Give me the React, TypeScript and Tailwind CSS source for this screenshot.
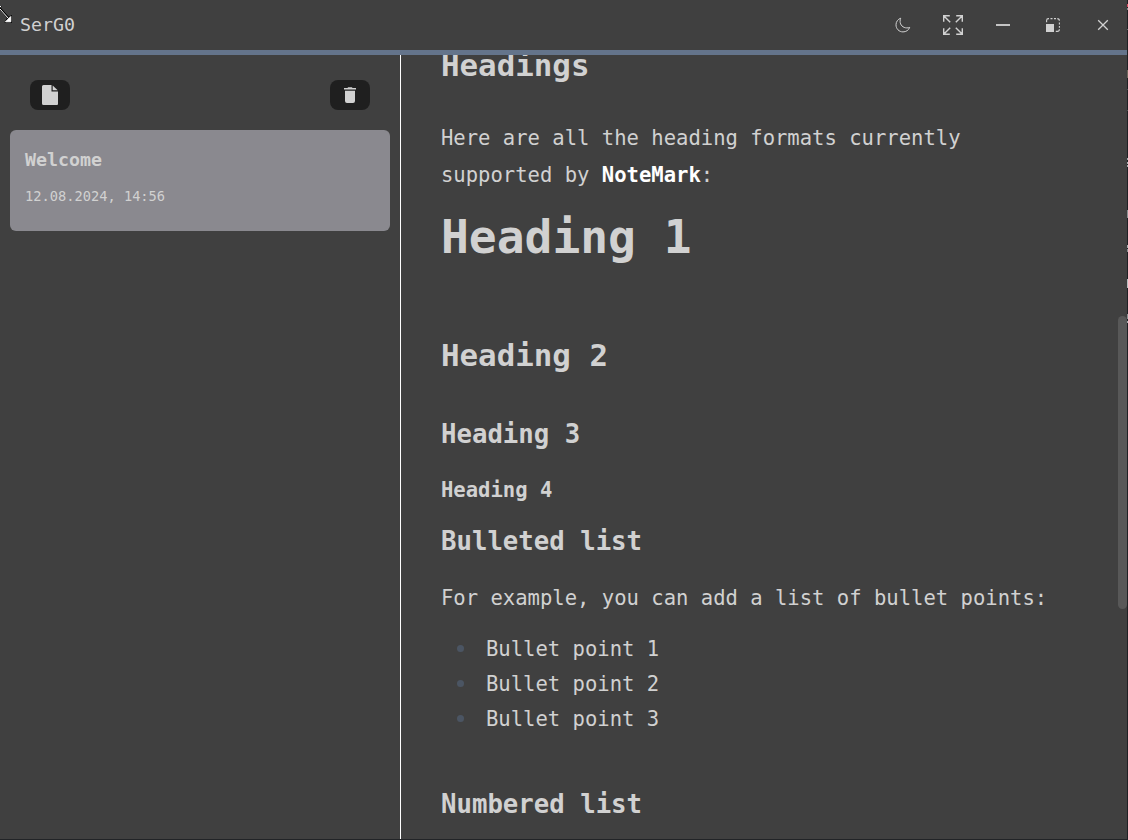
import type { ReactNode } from "react";

function Moon() {
  return (
    <svg width="16" height="16" viewBox="0 0 16 16" fill="none" stroke="currentColor" strokeWidth="1" strokeLinejoin="round">
      <path d="M5.7 1.2C2.900 2.200 1 4.700 1 7.800 1 11.800 4 14.900 8 14.900c3.100 0 5.700-1.700 6.700-4.500-1 .4-1.900.5-2.900.5C8 10.900 5.100 8 5.100 4.300c0-1.100.2-2.100.6-3.100Z" />
    </svg>
  );
}

function ArrowsOut() {
  return (
    <svg width="20" height="20" viewBox="0 0 20 20" fill="none" stroke="currentColor" strokeWidth="1.4">
      <path d="M.7 6.800V.7H6.800M.7.7l6.500 6.500M13.200.7H19.300V6.800M19.300.7l-6.500 6.500M.7 13.200V19.300H6.800M.7 19.300l6.500-6.500M19.300 13.200V19.300H13.200M19.300 19.300l-6.500-6.500" />
    </svg>
  );
}

function Restore() {
  return (
    <svg width="14" height="14" viewBox="0 0 14 14" fill="none" stroke="currentColor" strokeWidth="1.1">
      <rect x="0" y="6" width="8" height="8" fill="currentColor" stroke="none" />
      <path d="M.6 4.300V2.500A1.900 1.900 0 0 1 2.500.6H3M4.500.6h2M8 .6h2M11.300.6c1.300 0 2.100.8 2.100 2.200M13.400 4.500v1.900M13.400 7.900v1.900M13.400 11.200c0 1.400-.8 2.200-2.100 2.200H9.800" />
    </svg>
  );
}

function FileIcon() {
  return (
    <svg width="16" height="20" viewBox="0 0 16 20" fill="currentColor">
      <path d="M1.500 0H9.500v6.400H16V19a1 1 0 0 1-1 1H1.500A1.500 1.500 0 0 1 0 18.500v-17A1.500 1.500 0 0 1 1.500 0Z" />
      <path d="M10.700.4 15.700 5.300h-5Z" />
    </svg>
  );
}

function TrashIcon() {
  return (
    <svg width="12" height="16" viewBox="0 0 12 16" fill="currentColor">
      <path d="M0 1h3.400l.8-.8h3.600l.8.8H12v1.500H0ZM1 3.700h10v10.300a2 2 0 0 1-2 2H3a2 2 0 0 1-2-2Z" />
    </svg>
  );
}

function ResizeCursor() {
  return (
    <svg className="pointer-events-none absolute top-1 left-0" width="13" height="20" viewBox="0 0 13 20">
      <path d="M0 2.500h1.500M0 5.500 7.500 14 5 18.500h6.500V11.500L9 13.500 0 3.500" fill="#000" stroke="#000" strokeWidth="1" />
      <path d="M0 2.500h1M0 5l8.500 9.500M5.500 17.800 10.800 12.500v5.300Z" fill="#fff" stroke="#fff" strokeWidth="1" />
    </svg>
  );
}

function ToolButton({ children }: { children: ReactNode }) {
  return <button className="flex h-[30px] w-10 items-center justify-center rounded-lg bg-[#1f1f1f]">{children}</button>;
}

function Bullet({ children }: { children: ReactNode }) {
  return (
    <li className="flex items-center">
      <span className="relative -top-px mr-[22px] ml-4 size-[7px] rounded-full bg-[#4b5563]" />
      {children}
    </li>
  );
}

function DesktopEdge() {
  return (
    <div className="flex w-px shrink-0 flex-col bg-[#1f2124]">
      <span className="mt-1 h-[3px] bg-[#d9485f]" />
      <span className="mt-px h-[2px] bg-[#8a8f8f]" />
      <span className="mt-[19px] h-px bg-[#6b6e70]" />
      <span className="mt-10 h-2 bg-[#6f675c]" />
      <span className="mt-[11px] h-px bg-[#4d5052]" />
      <span className="mt-5 h-px bg-[#4d5052]" />
      <span className="mt-[47px] h-[2px] bg-[#a9adb0]" />
      <span className="mt-[2px] h-[2px] bg-[#a9adb0]" />
      <span className="mt-px h-[2px] bg-[#a9adb0]" />
      <span className="mt-[43px] h-2 bg-[#8d9194]" />
      <span className="mt-[27px] h-[3px] bg-[#a9adb0]" />
      <span className="mt-px h-[3px] bg-[#8d9194]" />
      <span className="mt-[27px] h-[9px] bg-[#b9bdc0]" />
      <span className="mt-[26px] h-[5px] bg-[#8d9194]" />
      <span className="mt-[2px] h-[2px] bg-[#a9adb0]" />
    </div>
  );
}

export default function App() {
  return (
    <div className="relative flex h-[840px] w-[1128px] overflow-hidden border-b border-[#222427] bg-[#404040] font-['DejaVu_Sans_Mono','Liberation_Mono',monospace] text-[#d1d1d1]">
      <div className="flex min-w-0 flex-1 flex-col">
        <header className="flex h-[55px] shrink-0 items-center border-b-[5px] border-[#64748b] pl-5">
          <span className="flex-1 text-[18.27px] leading-[50px]">SerG0</span>
          <nav className="-mr-px flex h-[50px] items-center">
            <button className="flex w-[50px] justify-center"><Moon /></button>
            <button className="flex w-[50px] justify-center"><ArrowsOut /></button>
            <button className="flex w-[50px] justify-center"><span className="h-[2px] w-[14px] bg-[#c4c4c4]" /></button>
            <button className="flex w-[50px] justify-center"><Restore /></button>
            <button className="flex w-[50px] justify-center">
              <svg width="12" height="12" viewBox="0 0 12 12" stroke="currentColor" strokeWidth="1.3"><path d="m1.200 1.200 9.600 9.600M10.800 1.200 1.200 10.800" /></svg>
            </button>
          </nav>
        </header>
        <main className="flex min-h-0 flex-1">
          <aside className="w-[401px] shrink-0 border-r border-white px-[10px] pt-[25px]">
            <div className="flex justify-between px-5">
              <ToolButton><FileIcon /></ToolButton>
              <ToolButton><TrashIcon /></ToolButton>
            </div>
            <div className="mt-5 h-[101px] rounded-md bg-[#8a898f] px-[15px] pt-[15px]">
              <h3 className="text-[18.27px] leading-[30px] font-bold">Welcome</h3>
              <p className="mt-[10px] text-[13.7px] leading-[22px]">12.08.2024, 14:56</p>
            </div>
          </aside>
          <article className="min-w-0 flex-1 overflow-hidden pl-10 text-[20.556px] leading-[37px] whitespace-nowrap">
            <h2 className="-mt-3 text-[30.83px] leading-[45px] font-bold">Headings</h2>
            <p className="mt-8">
              Here are all the heading formats currently
              <br />
              supported by <strong className="text-white">NoteMark</strong>:
            </p>
            <h1 className="mt-[15px] text-[46.25px] leading-[56px] font-bold">Heading 1</h1>
            <h2 className="mt-[68px] text-[30.83px] leading-[45px] font-bold">Heading 2</h2>
            <h3 className="mt-9 text-[25.69px] leading-[40px] font-bold">Heading 3</h3>
            <h4 className="mt-[19px] leading-[34px] font-bold">Heading 4</h4>
            <h3 className="mt-[14px] text-[25.69px] leading-[40px] font-bold">Bulleted list</h3>
            <p className="mt-[19px]">For example, you can add a list of bullet points:</p>
            <ul className="mt-[15px] leading-[35px]">
              <Bullet>Bullet point 1</Bullet>
              <Bullet>Bullet point 2</Bullet>
              <Bullet>Bullet point 3</Bullet>
            </ul>
            <h3 className="mt-[47px] text-[25.69px] leading-[40px] font-bold">Numbered list</h3>
          </article>
          <div className="w-[9px] pt-[261px]">
            <div className="h-[293px] rounded-[5px] bg-[#585858]" />
          </div>
        </main>
      </div>
      <DesktopEdge />
      <ResizeCursor />
    </div>
  );
}
